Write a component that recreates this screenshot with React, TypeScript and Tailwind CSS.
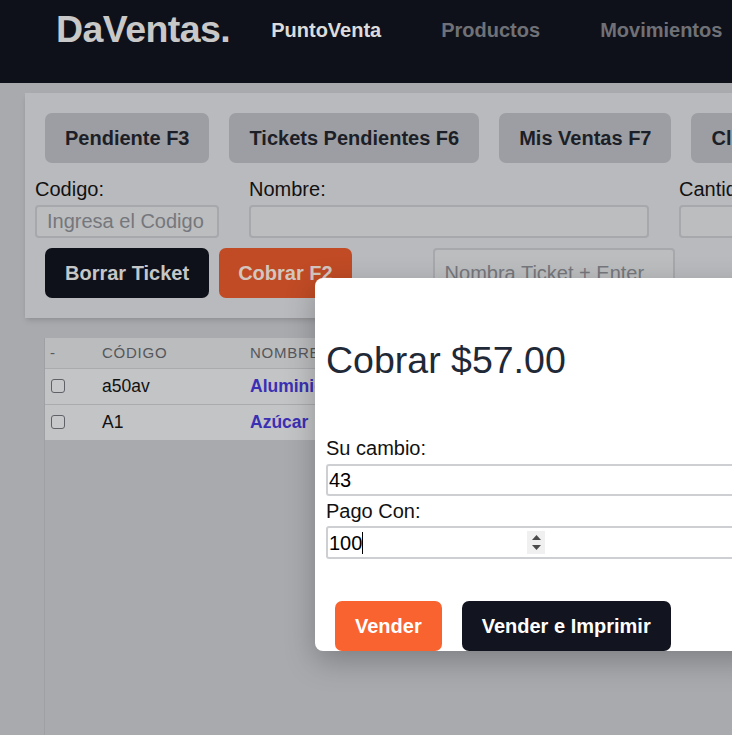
import React from 'react'

const topButtons = ['Pendiente F3', 'Tickets Pendientes F6', 'Mis Ventas F7', 'Clientes F8']

const rows = [
  { codigo: 'a50av', nombre: 'Aluminio' },
  { codigo: 'A1', nombre: 'Azúcar' },
]

function Header() {
  return (
    <header className="h-[83px] bg-[#0f111a]">
      <div className="flex h-[60px] items-center pl-[56px]">
        <span className="text-[37.5px] font-bold leading-none tracking-[-0.015em] text-[#c8c8c8]">DaVentas.</span>
        <nav className="ml-[41px] flex gap-[60px] text-[20px] font-bold">
          <a className="text-[#dcdcdc]">PuntoVenta</a>
          <a className="text-[#6f7177]">Productos</a>
          <a className="text-[#6f7177]">Movimientos</a>
        </nav>
      </div>
    </header>
  )
}

function Panel() {
  return (
    <section className="w-[1000px] bg-[#b9babd] px-[10px] pt-[20px] pb-[20px] shadow-md">
      <div className="flex gap-[20px] pl-[10px]">
        {topButtons.map((b) => (
          <button
            key={b}
            className="h-[50px] shrink-0 rounded-[7px] bg-[#9c9ea3] px-[20px] text-[20px] font-bold text-[#1c1f27]"
          >
            {b}
          </button>
        ))}
      </div>

      <div className="mt-[14px] flex gap-[30px] text-[20px] text-[#111]">
        <label className="flex w-[184px] flex-col">
          <span className="leading-[25px]">Codigo:</span>
          <input
            placeholder="Ingresa el Codigo"
            className="mt-[3px] h-[33px] rounded-[4px] border-2 border-[#a6a8ac] bg-[#bcbdbf] px-[10px] text-[20px] placeholder:text-[#75777c] outline-none"
          />
        </label>
        <label className="flex w-[400px] flex-col">
          <span className="leading-[25px]">Nombre:</span>
          <input className="mt-[3px] h-[33px] rounded-[4px] border-2 border-[#a6a8ac] bg-[#bcbdbf] px-[10px] outline-none" />
        </label>
        <label className="flex w-[150px] flex-col">
          <span className="leading-[25px]">Cantidad:</span>
          <input className="mt-[3px] h-[33px] rounded-[4px] border-2 border-[#a6a8ac] bg-[#bcbdbf] px-[10px] outline-none" />
        </label>
      </div>

      <div className="mt-[10px] flex items-start pl-[10px]">
        <button className="h-[50px] rounded-[7px] bg-[#0e111a] px-[20px] text-[20px] font-bold text-[#c6c6c6]">
          Borrar Ticket
        </button>
        <button className="ml-[10px] h-[50px] rounded-[7px] bg-[#c04b25] px-[19px] text-[20px] font-bold text-[#d2c6bf]">
          Cobrar F2
        </button>
        <input
          placeholder="Nombra Ticket + Enter"
          className="ml-[81px] h-[50px] w-[242px] rounded-[4px] border-2 border-[#a6a8ac] bg-[#bcbdbf] px-[10px] text-[20px] placeholder:text-[#75777c] outline-none"
        />
      </div>
    </section>
  )
}

function Tabla() {
  return (
    <div className="ml-[19px] mt-[20px] h-[420px] border-l border-[#9fa0a4]">
      <table className="w-[700px] border-collapse text-left">
        <thead>
          <tr className="h-[30px] bg-[#bbbcbe] text-[15px] font-medium uppercase tracking-wider text-[#55575c]">
            <th className="w-[51px] px-[5px] font-medium">-</th>
            <th className="w-[148px] px-[6px] font-medium">Código</th>
            <th className="px-[6px] font-medium">Nombre</th>
          </tr>
        </thead>
        <tbody className="text-[17.5px] text-[#111]">
          {rows.map((r) => (
            <tr key={r.codigo} className="h-[36px] border-t border-[#a9abae] bg-[#c3c4c6]">
              <td className="px-[6px]">
                <input
                  type="checkbox"
                  className="block h-[14px] w-[14px] appearance-none rounded-[3px] border border-[#5f6166] bg-[#c7c8ca]"
                />
              </td>
              <td className="px-[6px]">{r.codigo}</td>
              <td className="px-[6px] font-bold text-[#3b30b3]">{r.nombre}</td>
            </tr>
          ))}
        </tbody>
      </table>
    </div>
  )
}

function CobrarModal() {
  return (
    <div className="absolute left-[315px] top-[278px] h-[373px] w-[520px] overflow-hidden rounded-[8px] bg-white shadow-[0_10px_30px_rgba(0,0,0,0.25)]">
      <div className="px-[11px] pt-[60px]">
        <h2 className="text-[37.5px] font-medium leading-[45px] text-[#1f2937]">Cobrar $57.00</h2>

        <label className="mt-[50px] block text-[20px] leading-[30px] text-[#111]">Su cambio:</label>
        <div className="mt-[1px] flex h-[32px] items-center rounded-[3px] border-2 border-[#cdcfd3]">
          <input readOnly value="43" className="w-full pl-[1px] text-[20px] text-black outline-none" />
        </div>

        <label className="block text-[20px] leading-[30px] text-[#111]">Pago Con:</label>
        <div className="relative flex h-[33px] items-center rounded-[3px] border-2 border-[#cdcfd3]">
          <input readOnly value="100" className="w-[199px] pl-[1px] text-[20px] text-black outline-none" />
          {/* caret */}
          <span className="absolute left-[34px] top-[4px] h-[22px] w-px bg-black" />
          <div className="flex h-[23px] w-[18px] flex-col items-center justify-center gap-[5px] bg-[#f0f0f0]">
            <svg width="9" height="5" viewBox="0 0 9 5">
              <path d="M4.5 0 L9 5 L0 5 Z" fill="#4b4b4b" />
            </svg>
            <svg width="9" height="5" viewBox="0 0 9 5">
              <path d="M0 0 L9 0 L4.5 5 Z" fill="#4b4b4b" />
            </svg>
          </div>
        </div>
      </div>

      <div className="mt-[42px] flex gap-[20px] px-[20px]">
        <button className="h-[50px] rounded-[7px] bg-[#f9632f] px-[20px] text-[20px] font-bold text-white">Vender</button>
        <button className="h-[50px] rounded-[7px] bg-[#121520] px-[20px] text-[20px] font-bold text-white">
          Vender e Imprimir
        </button>
      </div>
    </div>
  )
}

export default function App() {
  return (
    <div className="relative h-screen w-screen overflow-hidden bg-[#a9aaae] font-['Liberation_Sans',Arial,sans-serif]">
      <Header />
      <main className="pl-[25px] pt-[10px]">
        <Panel />
        <Tabla />
      </main>
      <CobrarModal />
    </div>
  )
}
